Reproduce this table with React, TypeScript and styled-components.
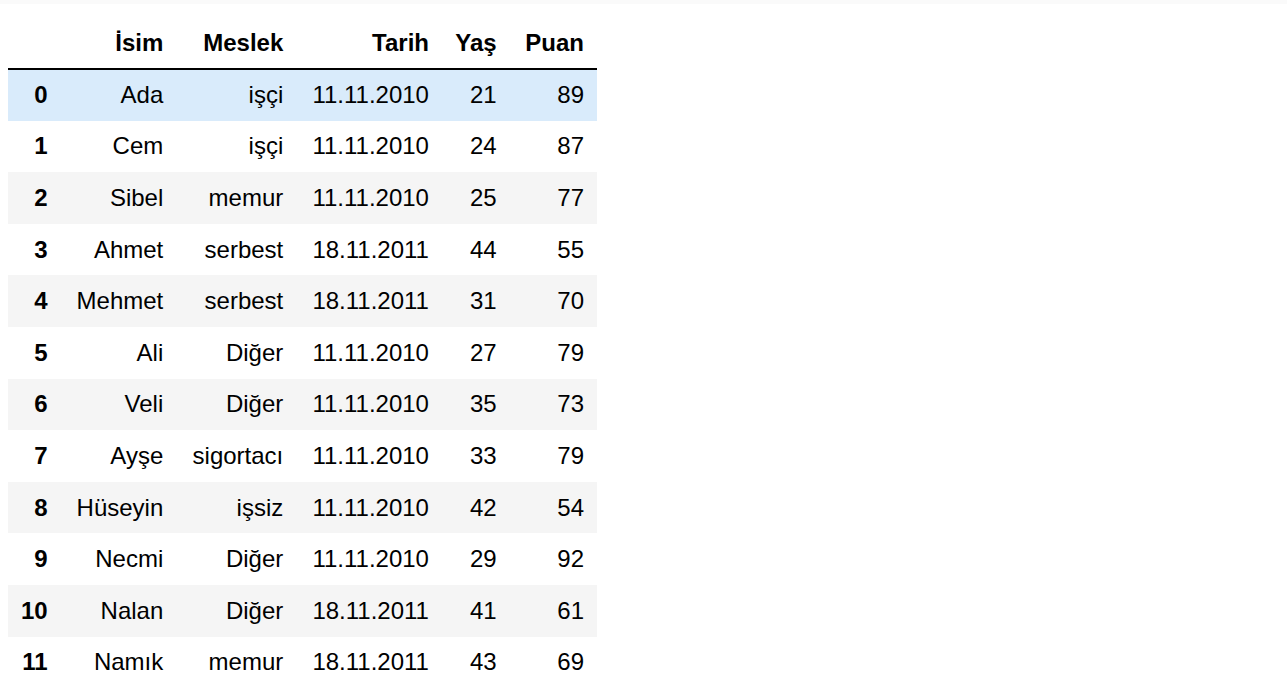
import React from "react";
import styled, { createGlobalStyle } from "styled-components";

const GlobalStyle = createGlobalStyle`
  body {
    margin: 0;
    background: #ffffff;
    font-family: "Liberation Sans", Arial, sans-serif;
    color: #000000;
  }
`;

const TopStrip = styled.div`
  height: 4px;
  background: #fafafa;
`;

const Output = styled.div`
  padding: 14px 8px 0;
`;

const Frame = styled.table`
  border-collapse: collapse;
  border-spacing: 0;
  table-layout: fixed;
  width: 589px;
  font-size: 24px;
  color: #000000;
`;

const Col = styled.col<{ $w: number }>`
  width: ${(p) => p.$w}px;
`;

const Head = styled.thead`
  border-bottom: 2px solid #000000;
`;

const HeadRow = styled.tr`
  height: 51px;
`;

const HeadCell = styled.th`
  text-align: right;
  font-weight: bold;
  padding: 0 13px 0 12px;
  vertical-align: middle;
  white-space: nowrap;
`;

const BodyRow = styled.tr<{ $active?: boolean }>`
  height: 51.6px;
  background: #ffffff;

  &:nth-child(odd) {
    background: #f5f5f5;
  }

  ${(p) => (p.$active ? `&& { background: #d9ebfb; }` : "")}
`;

const IndexCell = styled.th`
  text-align: right;
  font-weight: bold;
  padding: 0 13px 0 12px;
  vertical-align: middle;
  white-space: nowrap;
`;

const Cell = styled.td`
  text-align: right;
  padding: 0 13px 0 0;
  vertical-align: middle;
  white-space: nowrap;
`;

const columns = ["", "İsim", "Meslek", "Tarih", "Yaş", "Puan"];
const widths = [52.7, 115.6, 120, 145.7, 67.7, 87.3];

const rows: [string, string, string, number, number][] = [
  ["Ada", "işçi", "11.11.2010", 21, 89],
  ["Cem", "işçi", "11.11.2010", 24, 87],
  ["Sibel", "memur", "11.11.2010", 25, 77],
  ["Ahmet", "serbest", "18.11.2011", 44, 55],
  ["Mehmet", "serbest", "18.11.2011", 31, 70],
  ["Ali", "Diğer", "11.11.2010", 27, 79],
  ["Veli", "Diğer", "11.11.2010", 35, 73],
  ["Ayşe", "sigortacı", "11.11.2010", 33, 79],
  ["Hüseyin", "işsiz", "11.11.2010", 42, 54],
  ["Necmi", "Diğer", "11.11.2010", 29, 92],
  ["Nalan", "Diğer", "18.11.2011", 41, 61],
  ["Namık", "memur", "18.11.2011", 43, 69],
];

const App = () => {
  return (
    <>
      <GlobalStyle />
      <TopStrip />
      <Output>
        <Frame>
          <colgroup>
            {widths.map((w, i) => (
              <Col key={i} $w={w} />
            ))}
          </colgroup>
          <Head>
            <HeadRow>
              {columns.map((c, i) => (
                <HeadCell key={i}>{c}</HeadCell>
              ))}
            </HeadRow>
          </Head>
          <tbody>
            {rows.map((r, i) => (
              <BodyRow key={i} $active={i === 0}>
                <IndexCell>{i}</IndexCell>
                {r.map((v, j) => (
                  <Cell key={j}>{v}</Cell>
                ))}
              </BodyRow>
            ))}
          </tbody>
        </Frame>
      </Output>
    </>
  );
};

export default App;
